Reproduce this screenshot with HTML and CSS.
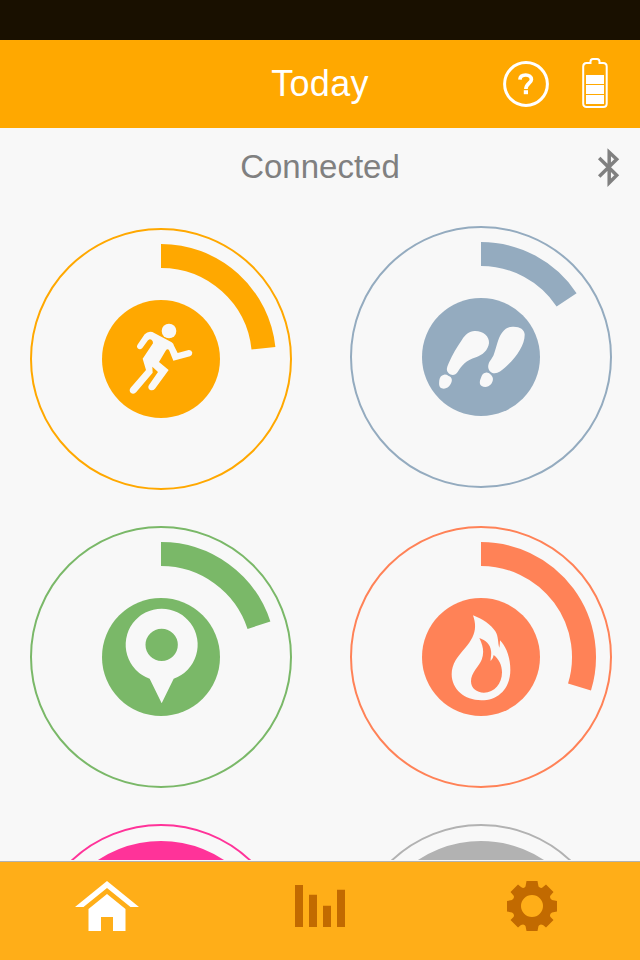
FILE: index.html
```html
<!DOCTYPE html>
<html lang="en">
<head>
    <meta charset="UTF-8">
    <meta name="viewport" content="width=device-width, initial-scale=1.0">
    <title>Today</title>
    <link rel="stylesheet" href="styles.css">
</head>
<body>
    <div class="app">
        <div class="status-bar"></div>

        <header class="header">
            <h1>Today</h1>
            <div class="header-icons">
                <svg class="help-icon" width="46" height="46" viewBox="0 0 46 46">
                    <circle cx="23" cy="23" r="21.4" fill="none" stroke="#fff" stroke-width="3"/>
                    <path d="M16.9 18.6C17.1 15.4 19.4 14 22.7 14C26 14 28.4 15.6 28.4 18.4C28.4 22 22.9 22.4 22.9 28" fill="none" stroke="#fff" stroke-width="3.7"/>
                    <rect x="20.8" y="29.2" width="4.2" height="4" fill="#fff"/>
                </svg>
                <svg class="battery-icon" width="28" height="52" viewBox="0 0 28 52">
                    <path d="M5.5 6H9.5V4.5Q9.5 2 12 2H16Q18.5 2 18.5 4.5V6H22.2Q25.7 6 25.7 9.5V46.5Q25.7 50 22.2 50H5.700Q2.200 50 2.200 46.500V9.500Q2.200 6 5.500 6Z" fill="none" stroke="#fff" stroke-width="2"/>
                    <path d="M5 18H23V27H5ZM5 28H23V37H5ZM5 38H23V47H5Z" fill="#fff"/>
                </svg>
            </div>
        </header>

        <main class="content">
            <div class="connection">
                <p>Connected</p>
                <svg class="bluetooth-icon" width="24" height="40" viewBox="0 0 24 40">
                    <path d="M2.200 11L19.700 28.300L12.200 35.800V5.200L19.700 12.200L2.200 29.500" fill="none" stroke="#808080" stroke-width="3.500"/>
                </svg>
            </div>

            <div class="gauges">
                <svg class="gauge activity" viewBox="0 0 262 262">
                    <circle class="outline" cx="131" cy="131" r="130"/>
                    <path class="arc" d="M131 28A103 103 0 0 1 233.440 120.230"/>
                    <circle class="disc" cx="131" cy="131" r="59"/>
                    <g class="glyph" transform="translate(70 70) scale(.33333)">
                        <circle cx="207" cy="99" r="22"/>
                        <path d="M112 141L134 109Q144 98 157 102L215 133Q221 137 222 143L233 165L266 156Q275 155 277 164Q277 171 270 175L220 188L208 158Q203 150 197 158L177 192L206 216L165 272Q158 280 149 275Q142 269 147 261L174 222L157 206L158 224L109 282Q101 291 92 284Q86 276 92 269L138 216L128 182L159 136Q159 125 149 124L144 127L127 150Q120 157 113 151Q109 147 112 141Z"/>
                    </g>
                </svg>

                <svg class="gauge steps" viewBox="0 0 262 262">
                    <circle class="outline" cx="131" cy="131" r="130"/>
                    <path class="arc" d="M131 28A103 103 0 0 1 216.600 73.800"/>
                    <circle class="disc" cx="131" cy="131" r="59"/>
                    <g class="glyph" transform="translate(70 70) scale(.33333)">
                        <path d="M164 105C188 104 209 120 207 142C204 163 188 177 168 184C137 193 126 209 113 228C106 239 94 239 86 232C77 223 81 214 86 202C98 174 111 153 126 131C136 116 147 106 164 105Z"/>
                        <path d="M278 92C299 91 313 100 314 115C315 145 290 184 256 214C245 224 235 232 224 232C209 231 201 217 206 203C209 194 217 188 222 174C230 152 233 128 246 110C256 97 265 92 278 92Z"/>
                        <path d="M72 236Q79 235 86 240C97 244 98 253 92 264C86 276 75 280 65 277C56 273 57 262 58 252C60 243 63 238 72 236Z"/>
                        <path d="M197 230C204 229 210 233 214 238C222 247 219 256 213 265C206 273 194 275 185 270C177 265 179 254 183 245C186 236 189 231 197 230Z"/>
                    </g>
                </svg>

                <svg class="gauge distance" viewBox="0 0 262 262">
                    <circle class="outline" cx="131" cy="131" r="130"/>
                    <path class="arc" d="M131 28A103 103 0 0 1 228.960 99.170"/>
                    <circle class="disc" cx="131" cy="131" r="59"/>
                    <g class="glyph" transform="translate(70 70) scale(.33333)">
                        <path fill-rule="evenodd" d="M149 248A108 108 0 1 1 221 248L185 322ZM185 98A48.500 48.500 0 1 0 185 195A48.500 48.500 0 1 0 185 98Z"/>
                    </g>
                </svg>

                <svg class="gauge calories" viewBox="0 0 262 262">
                    <circle class="outline" cx="131" cy="131" r="130"/>
                    <path class="arc" d="M131 28A103 103 0 0 1 229.500 161.110"/>
                    <circle class="disc" cx="131" cy="131" r="59"/>
                    <g class="glyph" transform="translate(70 70) scale(.33333)">
                        <path fill-rule="evenodd" d="M159 58C186 68 214 87 226 106C236 122 233 140 238 155Q240 144 240 133C260 153 271 187 271 222C271 277 235 313 184 313C133 313 95 279 95 235C95 202 113 182 136 155C160 126 174 100 159 58ZM178 126C190 150 193 170 185 191C177 211 153 230 153 256C153 277 170 290 192 290C223 290 246 264 246 229C246 208 237 189 221 177Q220 187 212 195C211 187 215 177 213 164C211 145 197 133 178 126Z"/>
                    </g>
                </svg>

                <svg class="gauge sleep" viewBox="0 0 262 262">
                    <circle class="outline" cx="131" cy="131" r="130"/>
                    <circle class="arc" cx="131" cy="131" r="102"/>
                    <circle class="disc" cx="131" cy="131" r="59"/>
                </svg>

                <svg class="gauge weight" viewBox="0 0 262 262">
                    <circle class="outline" cx="131" cy="131" r="130"/>
                    <circle class="arc" cx="131" cy="131" r="102"/>
                    <circle class="disc" cx="131" cy="131" r="59"/>
                </svg>
            </div>
        </main>

        <nav class="tab-bar">
            <a class="tab active">
                <svg width="64" height="50" viewBox="0 0 64 50">
                    <path d="M0 26L32 0L64 26H55.500L32 7L8.500 26Z"/>
                    <path d="M13.500 28L32 13L50.500 28V50H38V36H26V50H13.500Z"/>
                </svg>
            </a>
            <a class="tab chart">
                <svg width="50" height="50" viewBox="0 0 50 50">
                    <path d="M0 4H8V46H0ZM14 13.700H22V46H14ZM28 24.700H36V46H28ZM42 8.700H50V46H42Z"/>
                </svg>
            </a>
            <a class="tab">
                <svg width="50" height="50" viewBox="0 0 50 50">
                    <path fill-rule="evenodd" d="M19.500 0H30.500L31.500 5.500Q34 8 36 6L39 3.500L46.500 11L43.500 14.500Q42 17 45 19L50 20V30.500L45 31.500Q42 33 43.500 36L46.500 39L39 46.500L36 44Q33 42.500 31.500 45L30.500 50H19.500L18.500 45Q17 42.500 14 44L11 46.500L3.500 39L6.500 36Q8 33 5 31.500L0 30.500V20L5 19Q8 17 6.500 14.500L3.500 11L11 3.500L14 6Q17 8 18.500 5.500ZM25 14A11 11 0 1 0 25 36A11 11 0 1 0 25 14Z"/>
                </svg>
            </a>
        </nav>
    </div>
</body>
</html>
```
FILE: styles.css
```css
* {
    margin: 0;
    padding: 0;
    box-sizing: border-box;
}

body {
    font-family: "Liberation Sans", Arial, sans-serif;
    background: #f8f8f8;
}

svg {
    display: block;
}

.app {
    display: flex;
    flex-direction: column;
    width: 640px;
    height: 960px;
    overflow: hidden;
}

.status-bar {
    height: 40px;
    background: #191000;
}

.header {
    display: grid;
    grid-template-columns: 1fr auto 1fr;
    align-items: center;
    height: 88px;
    background: #ffa800;
    color: #fff;
}

.header h1 {
    grid-column: 2;
    font-size: 36px;
    font-weight: 400;
    letter-spacing: 0.3px;
    line-height: 88px;
}

.header-icons {
    display: flex;
    justify-content: flex-end;
    align-items: center;
    gap: 32px;
    padding-right: 31px;
}

.battery-icon {
    margin-top: -3px;
}

.content {
    height: 732px;
    overflow: hidden;
}

.connection {
    display: grid;
    grid-template-columns: 1fr auto 1fr;
    align-items: center;
    height: 78px;
    color: #808080;
}

.connection p {
    grid-column: 2;
    font-size: 33px;
    line-height: 78px;
}

.bluetooth-icon {
    justify-self: end;
    margin-right: 19px;
}

.gauges {
    display: grid;
    grid-template-columns: 262px 262px;
    grid-auto-rows: 262px;
    gap: 36px 58px;
    padding: 22px 0 0 30px;
}

.gauge {
    width: 262px;
    height: 262px;
}

.outline {
    fill: none;
    stroke: currentColor;
    stroke-width: 2;
}

.arc {
    fill: none;
    stroke: currentColor;
    stroke-width: 24;
}

.disc {
    fill: currentColor;
}

.glyph {
    fill: #f8f8f8;
}

.activity {
    color: #ffa800;
}

.steps {
    color: #94abbf;
    margin-top: -2px;
}

.distance {
    color: #7ab868;
}

.calories {
    color: #ff8257;
}

.sleep {
    color: #ff3399;
}

.weight {
    color: #b2b2b2;
}

.tab-bar {
    display: flex;
    justify-content: space-between;
    align-items: flex-start;
    height: 99px;
    margin-top: 1px;
    padding: 19px 83px 0 75px;
    border-top: 1px solid #b2b2b2;
    background: #ffae18;
}

.tab {
    color: #c26a00;
    fill: currentColor;
}

.tab.active {
    color: #fff;
}

.tab.chart {
    margin-right: 6px;
}
```
